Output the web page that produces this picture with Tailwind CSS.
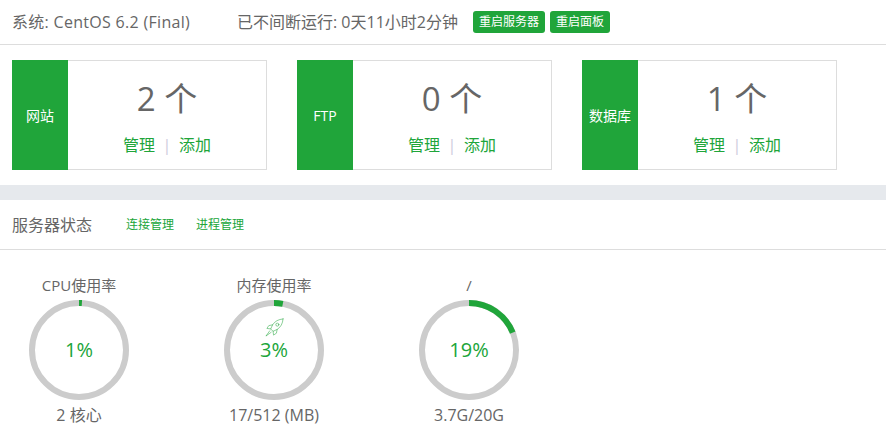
<!DOCTYPE html>
<html lang="zh-CN">
<head>
<meta charset="UTF-8">
<title>面板首页</title>
<script src="https://cdn.jsdelivr.net/npm/@tailwindcss/browser@4"></script>
</head>
<body class="bg-white text-[#666] font-['Open_Sans','Noto_Sans_CJK_SC',sans-serif] overflow-hidden">

<!-- top bar -->
<div class="h-[45px] border-b border-[#ddd] pl-3 flex items-center text-[16px]">
  <span class="w-[225px] tracking-[0.3px] whitespace-nowrap">系统: CentOS 6.2 (Final)</span>
  <span class="w-[236px] whitespace-nowrap">已不间断运行: 0天11小时2分钟</span>
  <span class="h-[22px] px-[6px] mr-[5px] rounded-[3px] bg-[#20a53a] text-white text-[12px] leading-[22px]">重启服务器</span>
  <span class="h-[22px] px-[6px] rounded-[3px] bg-[#20a53a] text-white text-[12px] leading-[22px]">重启面板</span>
</div>

<!-- count cards -->
<div class="flex gap-[30px] pl-3 pt-[15px] pb-[15px]">
  <div class="w-[255px] h-[110px] flex">
    <div class="w-[56px] bg-[#20a53a] text-white text-[14px] flex items-center justify-center">网站</div>
    <div class="flex-1 text-center border border-[#ddd] border-l-0">
      <div class="mt-[11px] text-[33px] leading-[54px]">2 个</div>
      <div class="mt-[7px] text-[16px] leading-[24px] text-[#20a53a]">管理<span class="mx-[7.5px] text-[#ccd]">|</span>添加</div>
    </div>
  </div>
  <div class="w-[255px] h-[110px] flex">
    <div class="w-[56px] bg-[#20a53a] text-white text-[14px] flex items-center justify-center">FTP</div>
    <div class="flex-1 text-center border border-[#ddd] border-l-0">
      <div class="mt-[11px] text-[33px] leading-[54px]">0 个</div>
      <div class="mt-[7px] text-[16px] leading-[24px] text-[#20a53a]">管理<span class="mx-[7.5px] text-[#ccd]">|</span>添加</div>
    </div>
  </div>
  <div class="w-[255px] h-[110px] flex">
    <div class="w-[56px] bg-[#20a53a] text-white text-[14px] flex items-center justify-center">数据库</div>
    <div class="flex-1 text-center border border-[#ddd] border-l-0">
      <div class="mt-[11px] text-[33px] leading-[54px]">1 个</div>
      <div class="mt-[7px] text-[16px] leading-[24px] text-[#20a53a]">管理<span class="mx-[7.5px] text-[#ccd]">|</span>添加</div>
    </div>
  </div>
</div>

<div class="h-[15px] bg-[#e6e9ed]"></div>

<!-- server status -->
<div class="h-[50px] border-b border-[#ddd] pl-3 flex items-center">
  <span class="text-[16px] w-[114px]">服务器状态</span>
  <span class="text-[12px] text-[#20a53a] w-[70px]">连接管理</span>
  <span class="text-[12px] text-[#20a53a]">进程管理</span>
</div>

<div class="flex gap-[95px] pl-[29px] pt-[21px]">
  <div class="w-[100px] text-center text-[15px]">
    <div class="leading-[28px] mb-[1px] whitespace-nowrap">CPU使用率</div>
    <div class="relative w-[100px] h-[100px]">
      <svg viewBox="0 0 100 100" class="w-[100px] h-[100px] -rotate-90">
        <circle cx="50" cy="50" r="47" fill="none" stroke="#ccc" stroke-width="6"/>
        <circle cx="50" cy="50" r="47" fill="none" stroke="#20a53a" stroke-width="6" pathLength="100" stroke-dasharray="1 99"/>
      </svg>
      <div class="absolute inset-0 flex items-center justify-center text-[20px] text-[#20a53a]">1%</div>
    </div>
    <div class="leading-[26px] mt-[2px] text-[16px] whitespace-nowrap">2 核心</div>
  </div>
  <div class="w-[100px] text-center text-[15px]">
    <div class="leading-[28px] mb-[1px] whitespace-nowrap">内存使用率</div>
    <div class="relative w-[100px] h-[100px]">
      <svg viewBox="0 0 100 100" class="w-[100px] h-[100px] -rotate-90">
        <circle cx="50" cy="50" r="47" fill="none" stroke="#ccc" stroke-width="6"/>
        <circle cx="50" cy="50" r="47" fill="none" stroke="#20a53a" stroke-width="6" pathLength="100" stroke-dasharray="3 97"/>
      </svg>
      <svg viewBox="0 0 20 20" class="absolute left-[41px] top-[18px] w-[19px] h-[19px]" fill="none" stroke="#20a53a" stroke-opacity=".55" stroke-width="1" stroke-linejoin="round" stroke-linecap="round">
        <path d="M19 1c-5 .4-8.600 2.400-11 6.200L6 11.500 8.500 14l4.300-2C16.600 9.600 18.600 6 19 1z"/>
        <circle cx="13" cy="7" r="1.600"/>
        <path d="M8 7.200 4 8 2 11l4 .5M12.800 12 12 16l-3 2-.5-4"/>
        <path d="M5 13.500 1 19l5.500-4"/>
      </svg>
      <div class="absolute inset-0 flex items-center justify-center text-[20px] text-[#20a53a]">3%</div>
    </div>
    <div class="leading-[26px] mt-[2px] text-[16px] whitespace-nowrap">17/512 (MB)</div>
  </div>
  <div class="w-[100px] text-center text-[15px]">
    <div class="leading-[28px] mb-[1px] whitespace-nowrap">/</div>
    <div class="relative w-[100px] h-[100px]">
      <svg viewBox="0 0 100 100" class="w-[100px] h-[100px] -rotate-90">
        <circle cx="50" cy="50" r="47" fill="none" stroke="#ccc" stroke-width="6"/>
        <circle cx="50" cy="50" r="47" fill="none" stroke="#20a53a" stroke-width="6" pathLength="100" stroke-dasharray="19 81"/>
      </svg>
      <div class="absolute inset-0 flex items-center justify-center text-[20px] text-[#20a53a]">19%</div>
    </div>
    <div class="leading-[26px] mt-[2px] text-[16px] whitespace-nowrap">3.7G/20G</div>
  </div>
</div>
</body>
</html>
